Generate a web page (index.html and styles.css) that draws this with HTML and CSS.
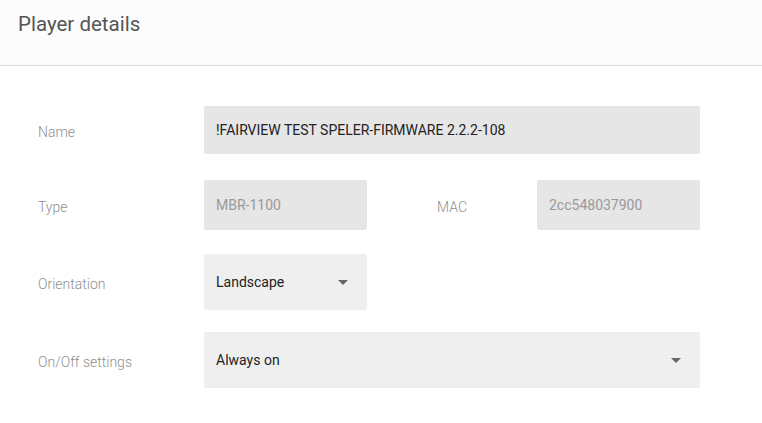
FILE: index.html
```html
<!DOCTYPE html>
<html lang="en">

<head>
    <meta charset="UTF-8">
    <meta name="viewport" content="width=device-width, initial-scale=1.0">
    <title>Player details</title>
    <link rel="stylesheet" href="styles.css">
</head>

<body>
    <div class="header">
        <h2>Player details</h2>
    </div>

    <form class="details" action="#" method="post">
        <div class="row row-name">
            <label class="label">Name</label>
            <div class="field field-wide field-name">!FAIRVIEW TEST SPELER-FIRMWARE 2.2.2-108</div>
        </div>

        <div class="row row-type">
            <label class="label">Type</label>
            <div class="field field-small field-disabled">MBR-1100</div>
            <label class="label label-mac">MAC</label>
            <div class="field field-small field-disabled">2cc548037900</div>
        </div>

        <div class="row row-orientation">
            <label class="label">Orientation</label>
            <div class="field field-small field-select">
                <span>Landscape</span>
                <span class="arrow"></span>
            </div>
        </div>

        <div class="row">
            <label class="label">On/Off settings</label>
            <div class="field field-wide field-select">
                <span>Always on</span>
                <span class="arrow"></span>
            </div>
        </div>
    </form>
</body>

</html>
```

FILE: styles.css
```css
body,
html {
    margin: 0;
    padding: 0;
    font-family: Roboto, "Liberation Sans", Arial, sans-serif;
    background: #fff;
}

.header {
    height: 65px;
    background: #fcfcfc;
    border-bottom: 1px solid #ddd;
}

h2 {
    margin: 0;
    padding: 11px 0 0 18px;
    font-size: 20.5px;
    line-height: 27px;
    font-weight: 400;
    color: #555;
}

.details {
    padding: 40px 0 0 38px;
}

.row {
    display: flex;
    align-items: center;
}

.row-name {
    margin-bottom: 26px;
}

.row-type {
    margin-bottom: 24px;
}

.row-orientation {
    margin-bottom: 22px;
}

.label {
    width: 166px;
    padding-top: 4px;
    font-size: 14px;
    font-weight: 300;
    color: #8f8f8f;
}

.label-mac {
    width: 100px;
    padding-left: 70px;
}

.field {
    display: flex;
    align-items: center;
    box-sizing: border-box;
    padding: 0 12px;
    border-radius: 2px;
    font-size: 14px;
    color: #222;
}

.field-wide {
    width: 496px;
}

.field-small {
    width: 163px;
}

.field-name {
    height: 48px;
    background: #e6e6e6;
}

.field-disabled {
    height: 50px;
    background: #e6e6e6;
    color: #999;
}

.field-select {
    height: 56px;
    justify-content: space-between;
    padding-right: 19px;
    background: #efefef;
}

.arrow {
    width: 0;
    height: 0;
    border-left: 5px solid transparent;
    border-right: 5px solid transparent;
    border-top: 5px solid #666;
}
```
